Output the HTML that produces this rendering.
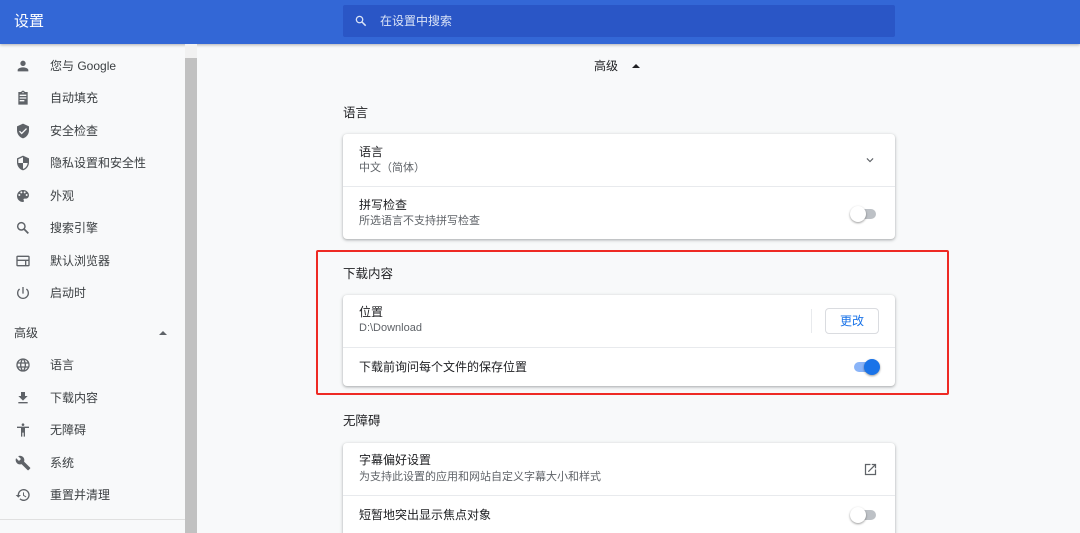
<!DOCTYPE html><html style="width:1080px;height:533px;overflow:hidden"><head><meta charset="utf-8"><style>
*{margin:0;padding:0;box-sizing:border-box}
body{width:1080px;height:533px;overflow:hidden;background:#f8f9fa;font-family:"Liberation Sans","Noto Sans CJK SC",sans-serif;color:#202124;position:relative;line-height:16px}
.hdr{position:absolute;left:0;top:0;width:1080px;height:44px;background:#3367d6;box-shadow:0 1px 3px rgba(0,0,0,.3)}
.hdr .t{position:absolute;left:14px;top:13px;color:#fff;font-size:15px;line-height:18px}
.search{position:absolute;left:343px;top:5px;width:552px;height:32px;background:#2a56c6;border-radius:2px}
.search span{position:absolute;left:37px;top:8px;color:#dbe4f7;font-size:12px}
.nav{position:absolute;left:0;font-size:12px;color:#3c4043;height:16px}
.nav svg{position:absolute;left:15px;top:0}
.nav span{position:absolute;left:50px;top:0;white-space:nowrap}
.sb{position:absolute;left:185px;top:58px;width:12px;height:475px;background:#c1c1c1}
.sbtop{position:absolute;left:185px;top:44px;width:12px;height:14px;background:#f1f1f1}
.card{position:absolute;left:343px;width:552px;background:#fff;border-radius:4px;box-shadow:0 1px 2px rgba(60,64,67,.3),0 1px 3px 1px rgba(60,64,67,.12)}
.row{position:absolute;left:0;width:552px;border-top:1px solid #e8eaed}
.l1{position:absolute;left:16px;font-size:12px;color:#202124;white-space:nowrap}
.l2{position:absolute;left:16px;font-size:11px;color:#5f6368;line-height:14px;white-space:nowrap}
.sec{position:absolute;left:343px;font-size:12.5px;color:#202124}
.tog{position:absolute;width:24px;height:10px;border-radius:5px;background:#bdc1c6}
.tog i{position:absolute;top:-3px;width:16px;height:16px;border-radius:50%;background:#fff;box-shadow:0 1px 2px rgba(0,0,0,.4)}
</style></head><body>
<div class="hdr"><div class="t">设置</div>
<div class="search"><svg style="position:absolute;left:11px;top:9px" width="14" height="14" viewBox="0 0 24 24"><circle cx="9.5" cy="9.5" r="5.5" fill="none" stroke="#dbe4f7" stroke-width="2.2"/><path d="M13.5 13.5 20 20" stroke="#dbe4f7" stroke-width="2.6"/></svg><span>在设置中搜索</span></div></div>
<div class="sbtop"></div><div class="sb"></div>
<div class="nav" style="top:58px"><svg width="16" height="16" viewBox="0 0 24 24"><path fill="#5f6368" d="M12 12a4 4 0 1 0 0-8 4 4 0 0 0 0 8zm0 2c-2.7 0-8 1.3-8 4v2h16v-2c0-2.7-5.3-4-8-4z"/></svg><span>您与 Google</span></div>
<div class="nav" style="top:90px"><svg width="16" height="16" viewBox="0 0 24 24"><path fill="#5f6368" d="M19 3h-4.2A3 3 0 0 0 12 1a3 3 0 0 0-2.8 2H5v19h14V3zm-7 0a1 1 0 1 1 0 2 1 1 0 0 1 0-2zm2 14H7v-2h7v2zm3-4H7v-2h10v2zm0-4H7V7h10v2z"/></svg><span>自动填充</span></div>
<div class="nav" style="top:123px"><svg width="16" height="16" viewBox="0 0 24 24"><path fill="#5f6368" d="M12 1 3 5v6c0 5.5 3.8 10.7 9 12 5.2-1.3 9-6.5 9-12V5l-9-4zm-2 16-4-4 1.4-1.4 2.6 2.6 6.6-6.6L18 9l-8 8z"/></svg><span>安全检查</span></div>
<div class="nav" style="top:155px"><svg width="16" height="16" viewBox="0 0 24 24"><path fill="#5f6368" d="M12 1 3 5v6c0 5.5 3.8 10.7 9 12 5.2-1.3 9-6.5 9-12V5l-9-4zm0 11h7c-.5 4.1-3.3 7.8-7 8.9V12H5V6.3l7-3.1V12z"/></svg><span>隐私设置和安全性</span></div>
<div class="nav" style="top:188px"><svg width="16" height="16" viewBox="0 0 24 24"><path fill="#5f6368" d="M12 3a9 9 0 0 0 0 18c.8 0 1.5-.7 1.5-1.5 0-.4-.1-.7-.4-1-.2-.3-.4-.6-.4-1 0-.8.7-1.5 1.5-1.5H16a5 5 0 0 0 5-5c0-4.4-4-8-9-8zM6.5 12a1.5 1.5 0 1 1 0-3 1.5 1.5 0 0 1 0 3zm3-4a1.5 1.5 0 1 1 0-3 1.5 1.5 0 0 1 0 3zm5 0a1.5 1.5 0 1 1 0-3 1.5 1.5 0 0 1 0 3zm3 4a1.5 1.5 0 1 1 0-3 1.5 1.5 0 0 1 0 3z"/></svg><span>外观</span></div>
<div class="nav" style="top:220px"><svg width="16" height="16" viewBox="0 0 24 24"><circle cx="9.5" cy="9.5" r="5.5" fill="none" stroke="#5f6368" stroke-width="2.2"/><path d="M13.5 13.5 20 20" stroke="#5f6368" stroke-width="2.6"/></svg><span>搜索引擎</span></div>
<div class="nav" style="top:253px"><svg width="16" height="16" viewBox="0 0 24 24"><path fill="#5f6368" d="M20 4H4a2 2 0 0 0-2 2v12a2 2 0 0 0 2 2h16a2 2 0 0 0 2-2V6a2 2 0 0 0-2-2zm-5 14H4v-6h11v6zm5 0h-3v-6h3v6zm0-8H4V6h16v4z"/></svg><span>默认浏览器</span></div>
<div class="nav" style="top:285px"><svg width="16" height="16" viewBox="0 0 24 24"><path fill="#5f6368" d="M13 3h-2v10h2V3zm4.8 2.2-1.4 1.4A7 7 0 1 1 7.6 6.6L6.2 5.2A9 9 0 1 0 17.8 5.2z"/></svg><span>启动时</span></div>
<div class="nav" style="top:325px"><span style="left:14px">高级</span></div>
<div style="position:absolute;left:159px;top:331px;width:0;height:0;border-left:4px solid transparent;border-right:4px solid transparent;border-bottom:4px solid #5f6368"></div>
<div class="nav" style="top:357px"><svg width="16" height="16" viewBox="0 0 24 24"><path fill="#5f6368" d="M12 2a10 10 0 1 0 0 20 10 10 0 0 0 0-20zm6.9 6h-3a15.7 15.7 0 0 0-1.4-3.6A8 8 0 0 1 18.9 8zM12 4c.8 1.2 1.5 2.5 1.9 4h-3.8c.4-1.4 1.1-2.8 1.9-4zM4.3 14a8 8 0 0 1 0-4h3.4a16.5 16.5 0 0 0 0 4H4.3zm.8 2h3a15.7 15.7 0 0 0 1.400 3.6A8 8 0 0 1 5.1 16zm3-8h-3a8 8 0 0 1 4.3-3.6C8.8 5.6 8.4 6.8 8.1 8zM12 20c-.8-1.2-1.5-2.5-1.9-4h3.8c-.4 1.4-1.1 2.8-1.9 4zm2.3-6H9.7a14.7 14.7 0 0 1 0-4h4.7a14.7 14.7 0 0 1 0 4zm.3 5.6c.6-1.1 1.1-2.3 1.4-3.6h3a8 8 0 0 1-4.4 3.6zm1.8-5.6a16.5 16.5 0 0 0 0-4h3.4a8 8 0 0 1 0 4h-3.4z"/></svg><span>语言</span></div>
<div class="nav" style="top:390px"><svg width="16" height="16" viewBox="0 0 24 24"><path fill="#5f6368" d="M19 9h-4V3H9v6H5l7 7 7-7zM5 18v2h14v-2H5z"/></svg><span>下载内容</span></div>
<div class="nav" style="top:422px"><svg width="16" height="16" viewBox="0 0 24 24"><path fill="#5f6368" d="M12 2a2 2 0 1 1 0 4 2 2 0 0 1 0-4zm9 7h-6v13h-2v-6h-2v6H9V9H3V7h18v2z"/></svg><span>无障碍</span></div>
<div class="nav" style="top:455px"><svg width="16" height="16" viewBox="0 0 24 24"><path fill="#5f6368" d="M22.7 19 13.6 9.9c.9-2.3.4-5-1.5-6.9-2-2-5-2.4-7.4-1.3L9 6 6 9 1.6 4.7C.4 7.1.9 10.1 2.9 12.1c1.9 1.9 4.6 2.4 6.9 1.5l9.1 9.1c.4.4 1 .4 1.4 0l2.3-2.3c.5-.4.5-1.1.1-1.4z"/></svg><span>系统</span></div>
<div class="nav" style="top:487px"><svg width="16" height="16" viewBox="0 0 24 24"><path fill="#5f6368" d="M13 3a9 9 0 0 0-9 9H1l4 4 4-4H6a7 7 0 1 1 2.1 5l-1.4 1.4A9 9 0 1 0 13 3zm-1 5v5l4.3 2.5.7-1.2-3.5-2.1V8H12z"/></svg><span>重置并清理</span></div>
<div style="position:absolute;left:0;top:519px;width:185px;border-top:1px solid #e0e0e0"></div>

<div style="position:absolute;left:594px;top:58px;font-size:12px">高级</div>
<div style="position:absolute;left:632px;top:64px;width:0;height:0;border-left:4px solid transparent;border-right:4px solid transparent;border-bottom:4px solid #202124"></div>

<div class="sec" style="top:105px">语言</div>
<div class="card" style="top:134px;height:105px">
<div class="l1" style="top:10px">语言</div><div class="l2" style="top:27px">中文（简体）</div>
<svg style="position:absolute;left:520px;top:19px" width="14" height="14" viewBox="0 0 24 24"><path d="M7.4 8.6 12 13.2l4.6-4.6L18 10l-6 6-6-6z" fill="#5f6368"/></svg>
<div class="row" style="top:52px;height:53px"><div class="l1" style="top:10px">拼写检查</div><div class="l2" style="top:27px">所选语言不支持拼写检查</div>
<div class="tog" style="left:509px;top:22px"><i style="left:-2px"></i></div></div>
</div>

<div style="position:absolute;left:316px;top:250px;width:633px;height:145px;border:2px solid #ee2a24;border-radius:2px"></div>
<div class="sec" style="top:266px">下载内容</div>
<div class="card" style="top:295px;height:91px">
<div class="l1" style="top:9px">位置</div><div class="l2" style="top:26px">D:\Download</div>
<div style="position:absolute;left:468px;top:14px;height:24px;border-left:1px solid #e8eaed"></div>
<div style="position:absolute;left:482px;top:13px;width:54px;height:26px;border:1px solid #dadce0;border-radius:4px;color:#1a73e8;font-size:12px;text-align:center;line-height:24px">更改</div>
<div class="row" style="top:52px;height:39px"><div class="l1" style="top:11px">下载前询问每个文件的保存位置</div>
<div class="tog" style="left:511px;top:14px;background:#8ab4f8"><i style="left:10px;background:#1a73e8"></i></div></div>
</div>

<div class="sec" style="top:413px">无障碍</div>
<div class="card" style="top:443px;height:100px">
<div class="l1" style="top:9px">字幕偏好设置</div><div class="l2" style="top:27px">为支持此设置的应用和网站自定义字幕大小和样式</div>
<svg style="position:absolute;left:520px;top:19px" width="15" height="15" viewBox="0 0 24 24"><path d="M19 19H5V5h7V3H3v18h18v-9h-2v7zM14 3v2h3.6l-9.8 9.8 1.4 1.4L19 6.4V10h2V3h-7z" fill="#5f6368"/></svg>
<div class="row" style="top:52px;height:48px"><div class="l1" style="top:11px">短暂地突出显示焦点对象</div>
<div class="tog" style="left:509px;top:14px"><i style="left:-2px"></i></div></div>
</div>
</body></html>
